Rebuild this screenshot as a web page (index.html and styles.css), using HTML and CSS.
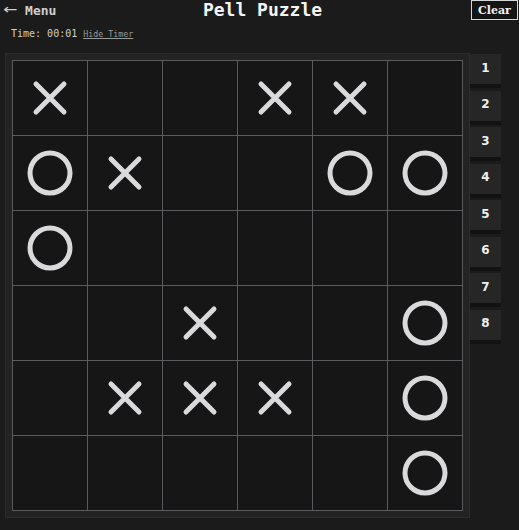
FILE: index.html
```html
<!DOCTYPE html>
<html>
<head>
<meta charset="utf-8">
<link rel="stylesheet" href="styles.css">
</head>
<body>
<header class="top">
  <a class="menu"><span class="arrow">←</span> Menu</a>
  <h1 class="title">Pell Puzzle</h1>
  <button class="clear">Clear</button>
</header>
<div class="timer">Time: 00:01 <a class="hide">Hide Timer</a></div>
<main class="game">
  <div class="panel">
    <div class="grid">
      <div class="cell x"></div><div class="cell"></div><div class="cell"></div><div class="cell x"></div><div class="cell x"></div><div class="cell"></div>
      <div class="cell o"></div><div class="cell x"></div><div class="cell"></div><div class="cell"></div><div class="cell o"></div><div class="cell o"></div>
      <div class="cell o"></div><div class="cell"></div><div class="cell"></div><div class="cell"></div><div class="cell"></div><div class="cell"></div>
      <div class="cell"></div><div class="cell"></div><div class="cell x"></div><div class="cell"></div><div class="cell"></div><div class="cell o"></div>
      <div class="cell"></div><div class="cell x"></div><div class="cell x"></div><div class="cell x"></div><div class="cell"></div><div class="cell o"></div>
      <div class="cell"></div><div class="cell"></div><div class="cell"></div><div class="cell"></div><div class="cell"></div><div class="cell o"></div>
    </div>
  </div>
  <div class="side">
    <button class="num">1</button>
    <button class="num">2</button>
    <button class="num">3</button>
    <button class="num">4</button>
    <button class="num">5</button>
    <button class="num">6</button>
    <button class="num">7</button>
    <button class="num">8</button>
  </div>
</main>
<script>
document.querySelectorAll('.cell.x').forEach(function(c){
  c.innerHTML='<svg viewBox="0 0 74 74" width="74" height="74"><path d="M23 23 L51 51 M51 23 L23 51" stroke="#dadadc" stroke-width="5" stroke-linecap="round" fill="none"/></svg>';
});
document.querySelectorAll('.cell.o').forEach(function(c){
  c.innerHTML='<svg viewBox="0 0 74 74" width="74" height="74"><circle cx="37" cy="37" r="20" stroke="#dadadc" stroke-width="5" fill="none"/></svg>';
});
</script>
</body>
</html>
```

FILE: styles.css
```css
html, body {
  margin: 0;
  padding: 0;
  background: #1b1b1b;
  color: #e6e6e6;
}
body {
  font-family: "DejaVu Sans Mono", monospace;
  width: 519px;
  height: 530px;
  overflow: hidden;
}
.top {
  display: grid;
  grid-template-columns: 1fr auto 1fr;
  align-items: start;
  height: 22px;
}
.menu {
  justify-self: start;
  font-size: 13px;
  font-weight: bold;
  color: #cfcfcf;
  padding: 2px 0 0 3px;
  line-height: 15px;
}
.arrow {
  font-family: "DejaVu Sans", sans-serif;
  font-weight: normal;
  font-size: 17px;
  line-height: 15px;
  display: inline-block;
  transform: scaleY(0.8);
}
.title {
  margin: 0;
  font-size: 18px;
  font-weight: bold;
  color: #f4f4f4;
  line-height: 20px;
  padding-left: 6px;
}
.clear {
  justify-self: end;
  font-family: "DejaVu Serif", serif;
  font-weight: bold;
  font-size: 11px;
  color: #f2f2f2;
  background: #141414;
  border: 1px solid #d8d8d8;
  height: 20px;
  width: 47px;
  padding: 0;
  margin: 0 1px 0 0;
}
.timer {
  font-size: 10px;
  color: #cfcfcf;
  padding: 6px 0 0 11px;
  line-height: 12px;
  height: 25px;
  box-sizing: border-box;
}
.hide {
  font-size: 8.3px;
  color: #9a9a9a;
  text-decoration: underline;
}
.game {
  display: flex;
  align-items: flex-start;
  padding-left: 5px;
  margin-top: 6px;
}
.panel {
  background: #232323;
  border: 1px solid #2c2c2c;
  padding: 6px;
}
.grid {
  display: grid;
  grid-template-columns: repeat(6, 74px);
  grid-template-rows: repeat(6, 74px);
  gap: 1px;
  padding: 1px;
  background: #5a5a5e;
}
.cell {
  background: #161616;
  width: 74px;
  height: 74px;
}
.cell svg {
  display: block;
}
.side {
  display: flex;
  flex-direction: column;
  gap: 2.5px;
  padding-top: 1px;
}
.num {
  width: 31px;
  height: 34px;
  padding: 0 0 3px 0;
  margin: 0;
  border: none;
  border-bottom: 4px solid #121212;
  background: #262626;
  color: #f0f0f0;
  font-family: "DejaVu Sans", sans-serif;
  font-weight: bold;
  font-size: 12px;
  box-sizing: border-box;
}
```
